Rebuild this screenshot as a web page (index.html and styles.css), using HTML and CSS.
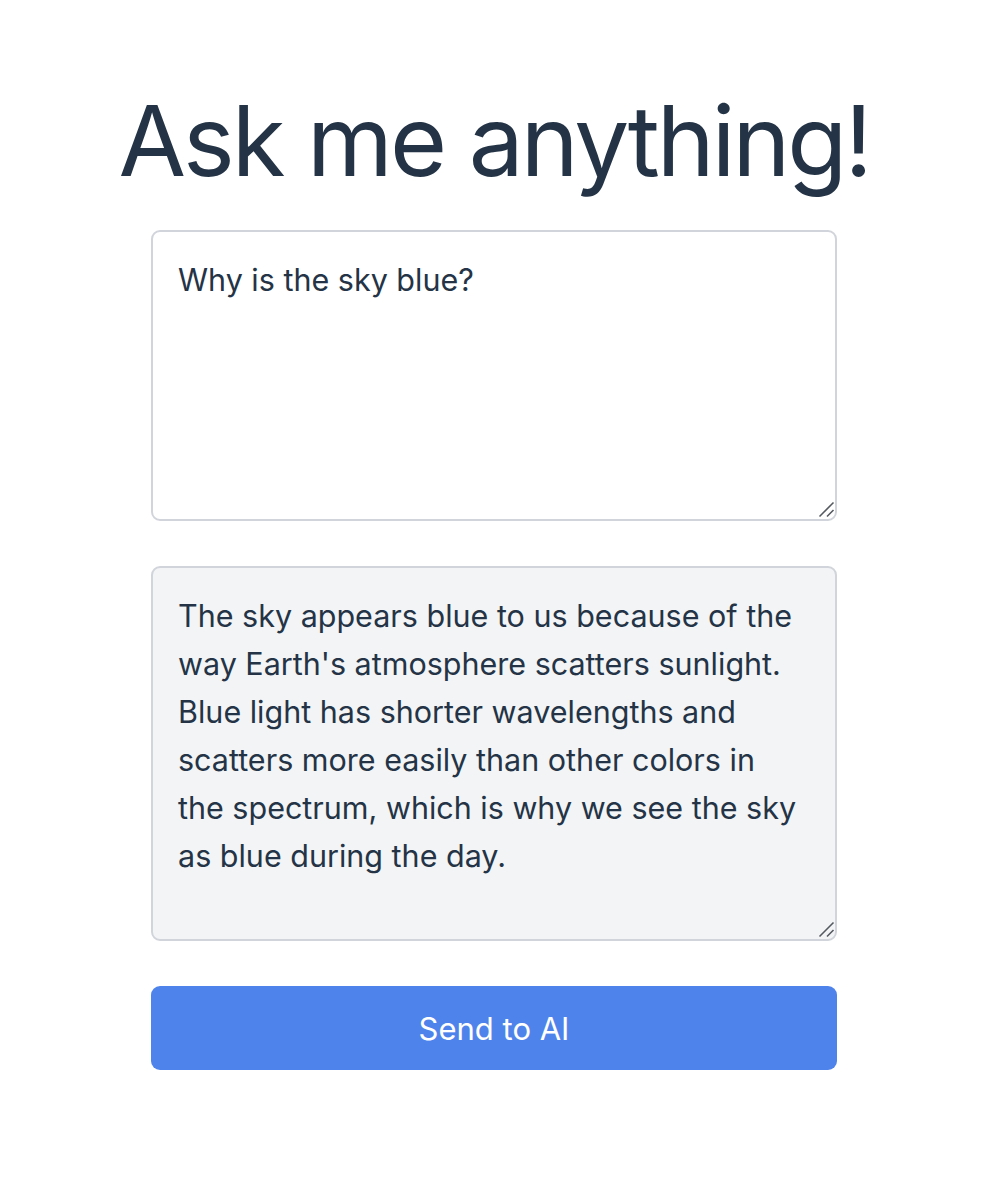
FILE: index.html
```html
<!DOCTYPE html>
<html lang="en">
<head>
<meta charset="utf-8">
<title>Ask me anything!</title>
<link rel="stylesheet" href="styles.css">
</head>
<body>
<main class="page">
  <h1 class="title">Ask me anything!</h1>
  <div class="form">
    <div class="field-wrap">
      <textarea class="field field-question">Why is the sky blue?</textarea>
      <svg class="grip" width="18" height="18" viewBox="0 0 18 18" aria-hidden="true">
        <path d="M2.5 16.5 L16.5 2.5" />
        <path d="M10 16.5 L16.5 10" />
      </svg>
    </div>
    <div class="field-wrap">
      <textarea class="field field-answer" readonly>The sky appears blue to us because of the way Earth's atmosphere scatters sunlight. Blue light has shorter wavelengths and scatters more easily than other colors in the spectrum, which is why we see the sky as blue during the day.</textarea>
      <svg class="grip" width="18" height="18" viewBox="0 0 18 18" aria-hidden="true">
        <path d="M2.5 16.5 L16.5 2.5" />
        <path d="M10 16.5 L16.5 10" />
      </svg>
    </div>
    <button class="send" type="button">Send to AI</button>
  </div>
</main>
</body>
</html>
```

FILE: styles.css
```css
html, body {
  margin: 0;
  padding: 0;
  background: #ffffff;
}

body {
  font-family: "Inter", "Noto Sans", sans-serif;
  color: #243446;
}

.page {
  display: flex;
  flex-direction: column;
  align-items: center;
  padding-top: 92px;
}

.title {
  margin: 0;
  font-size: 98px;
  line-height: 98px;
  font-weight: 400;
  color: #243446;
  letter-spacing: -3px;
}

.form {
  width: 686px;
  margin-top: 40px;
  display: flex;
  flex-direction: column;
  gap: 45px;
}

.field-wrap {
  position: relative;
}

.field {
  box-sizing: border-box;
  width: 100%;
  margin: 0;
  display: block;
  padding: 24px 30px 24px 25px;
  border: 2px solid #d1d5db;
  border-radius: 9px;
  font-family: "Inter", "Noto Sans", sans-serif;
  font-size: 30.5px;
  line-height: 48px;
  color: #243446;
  resize: none;
  outline: none;
}

.field-question {
  height: 291px;
  background: #ffffff;
}

.field-answer {
  height: 375px;
  background: #f3f4f6;
}

.grip {
  position: absolute;
  right: 2px;
  bottom: 3px;
  pointer-events: none;
}

.grip path {
  stroke: #555a60;
  stroke-width: 1.6;
  fill: none;
}

.send {
  box-sizing: border-box;
  width: 100%;
  height: 84px;
  border: none;
  border-radius: 9px;
  background: #4f83ec;
  color: #ffffff;
  font-family: "Inter", "Noto Sans", sans-serif;
  font-size: 31px;
  cursor: pointer;
}
```
